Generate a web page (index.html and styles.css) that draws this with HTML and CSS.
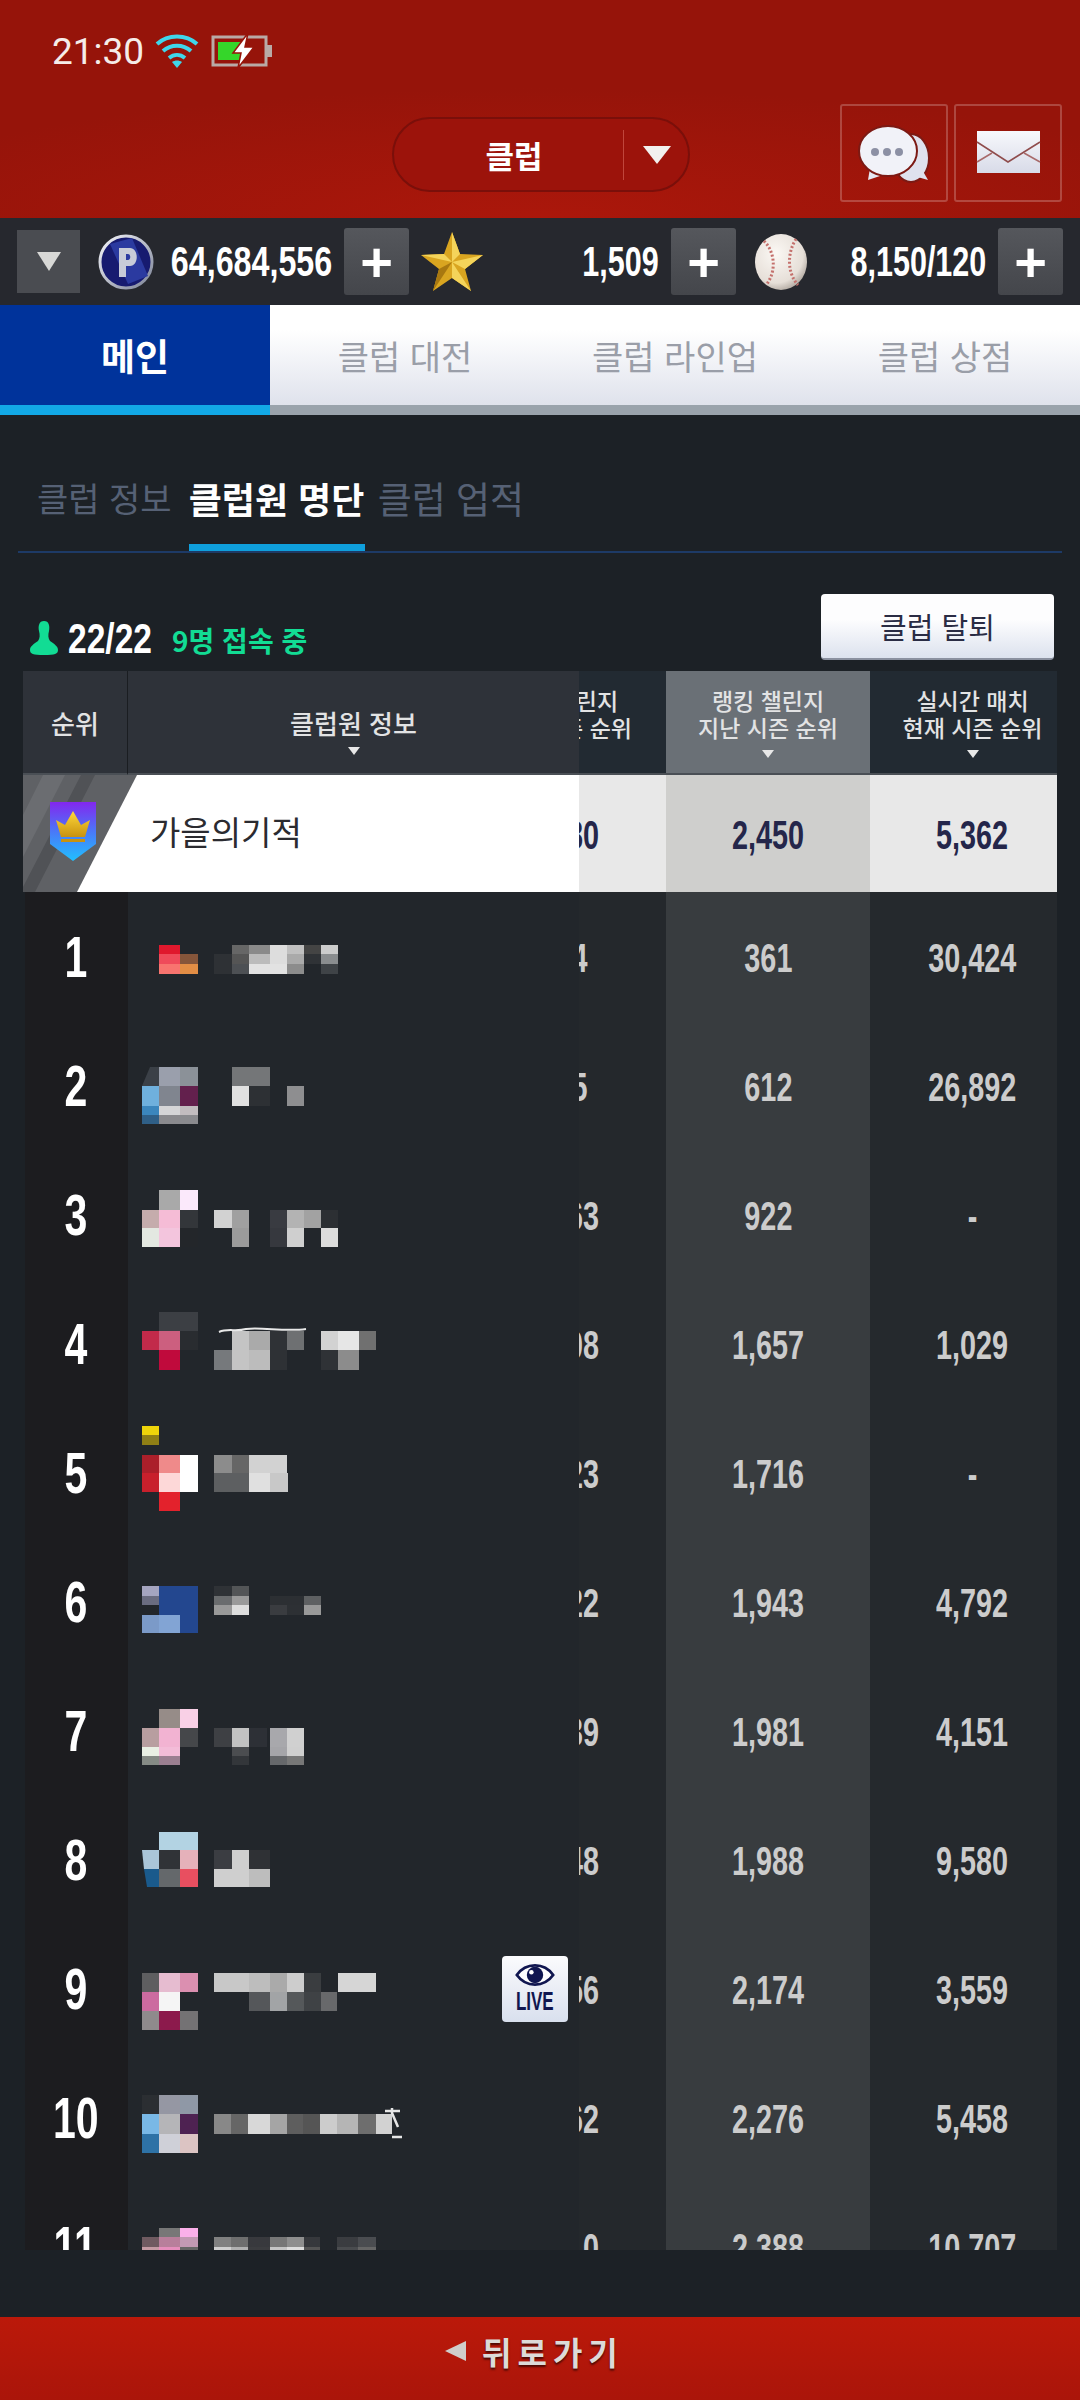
FILE: index.html
```html
<!DOCTYPE html>
<html lang="ko">
<head>
  <meta charset="UTF-8">
  <meta name="viewport" content="width=device-width, initial-scale=1.0">
  <title>클럽원 명단</title>
  <link rel="stylesheet" href="styles.css">
</head>
<body>
  <header class="top">
    <!-- status bar -->
    <div class="status">
      <span class="time">21:30</span>
      <svg class="wifi" viewBox="0 0 44 36" width="44" height="36">
        <g fill="none" stroke="#3fd6ea" stroke-width="4">
          <path d="M2 11 C13 1 31 1 42 11"/>
          <path d="M8 18 C16 11 28 11 36 18"/>
          <path d="M14 25 C19 21 25 21 30 25"/>
        </g>
        <path d="M17 29 C20 27 24 27 27 29 L22 35 Z" fill="#3fd6ea"/>
      </svg>
      <svg class="battery" viewBox="0 0 62 36" width="62" height="36">
        <rect x="2" y="4" width="53" height="28" fill="none" stroke="#b9aaa6" stroke-width="3"/>
        <rect x="56" y="12" width="5" height="12" fill="#b9aaa6"/>
        <rect x="7" y="9" width="24" height="18" fill="#35d62a"/>
        <path d="M37 0 L22 20 L30 20 L27 35 L43 14 L34 14 Z" fill="#fff" stroke="#961409" stroke-width="1.5"/>
      </svg>
    </div>
    <div class="nav">
      <div class="pill">
        <span class="pill-label">클럽</span>
        <i class="pill-sep"></i>
        <i class="pill-arrow"></i>
      </div>
      <div class="nav-icons">
        <div class="icon-box">
          <svg viewBox="0 0 108 98" width="108" height="98">
            <ellipse cx="71" cy="54" rx="18" ry="24" fill="#dfe2ee" stroke="#7c1a14" stroke-width="2"/>
            <path d="M74 72 L88 76 L80 62 Z" fill="#dfe2ee"/>
            <path d="M30 64 L28 76 L46 70 Z" fill="#e6e8f2"/>
            <ellipse cx="48" cy="47" rx="29" ry="25" fill="#f1f2f8" stroke="#7c1a14" stroke-width="2"/>
            <circle cx="35" cy="48" r="4" fill="#8c90a4"/>
            <circle cx="47" cy="48" r="4" fill="#8c90a4"/>
            <circle cx="59" cy="48" r="4" fill="#8c90a4"/>
          </svg>
        </div>
        <div class="icon-box">
          <svg viewBox="0 0 108 98" width="108" height="98">
            <defs>
              <linearGradient id="mailFill" x1="0" y1="0" x2="0" y2="1">
                <stop offset="0" stop-color="#f7f8fc"/>
                <stop offset="1" stop-color="#d8dbe8"/>
              </linearGradient>
            </defs>
            <rect x="23" y="27" width="63" height="42" fill="url(#mailFill)"/>
            <path d="M23 38 L54 58 L86 38" fill="none" stroke="#8f4c4c" stroke-width="1.5"/>
            <path d="M23 58 L38 49 M86 58 L70 49" fill="none" stroke="#a86a6a" stroke-width="1.5"/>
          </svg>
        </div>
      </div>
    </div>
  </header>

  <!-- currency bar -->
  <div class="resources">
    <div class="drop"><i></i></div>
    <div class="res res-points">
      <svg viewBox="0 0 56 56" width="56" height="56">
        <defs>
          <linearGradient id="coinRim" x1="0" y1="0" x2="1" y2="1">
            <stop offset="0" stop-color="#f4f5fa"/>
            <stop offset="1" stop-color="#7d8498"/>
          </linearGradient>
        </defs>
        <circle cx="28" cy="28" r="26" fill="#171b70" stroke="url(#coinRim)" stroke-width="3"/>
        <path d="M12 10 L34 4 L50 42 L30 50 Z" fill="#2b3aa0"/>
        <path d="M21 14 H32 C41 14 41 32 32 32 H28 V43 H21 Z M28 20 V26 H30 C33 26 33 20 30 20 Z" fill="#c8ccd8" fill-rule="evenodd"/>
      </svg>
      <span class="num"><b>64,684,556</b></span>
      <div class="plus">+</div>
    </div>
    <div class="res res-stars">
      <svg viewBox="0 0 64 60" width="64" height="60">
        <path d="M32 0 L40 22 L63 23 L45 37 L51 59 L32 46 L13 59 L19 37 L1 23 L24 22 Z" fill="#d9a520"/>
        <path d="M32 0 L40 22 L32 30 Z M63 23 L45 37 L32 30 Z M51 59 L32 46 L32 30 Z M1 23 L24 22 L32 30 Z" fill="#f4d45a"/>
        <path d="M13 59 L19 37 L32 30 Z" fill="#a87810"/>
      </svg>
      <span class="num"><b>1,509</b></span>
      <div class="plus">+</div>
    </div>
    <div class="res res-balls">
      <svg viewBox="0 0 54 58" width="54" height="58">
        <defs>
          <radialGradient id="ballFill" cx="0.4" cy="0.35" r="0.75">
            <stop offset="0" stop-color="#fbf8f4"/>
            <stop offset="0.7" stop-color="#e6dfd8"/>
            <stop offset="1" stop-color="#9d948c"/>
          </radialGradient>
        </defs>
        <ellipse cx="27" cy="29" rx="26" ry="28" fill="url(#ballFill)"/>
        <path d="M10 8 C22 20 22 40 12 52" fill="none" stroke="#c4706c" stroke-width="3" stroke-dasharray="2 2"/>
        <path d="M42 6 C33 20 33 40 44 52" fill="none" stroke="#c4706c" stroke-width="3" stroke-dasharray="2 2"/>
      </svg>
      <span class="num"><b>8,150/120</b></span>
      <div class="plus">+</div>
    </div>
  </div>

  <nav class="tabs">
    <div class="tab tab-on">메인</div>
    <div class="tab">클럽 대전</div>
    <div class="tab">클럽 라인업</div>
    <div class="tab">클럽 상점</div>
  </nav>

  <div class="subtabs">
    <span class="subtab subtab-a">클럽 정보</span>
    <span class="subtab subtab-on">클럽원 명단</span>
    <span class="subtab subtab-b">클럽 업적</span>
  </div>

  <div class="count-row">
    <svg class="person" viewBox="0 0 28 34" width="28" height="34">
      <path d="M14 0 C19 0 20 5 19 10 C18 14 18 17 20 20 C24 23 28 25 28 29 C28 33 25 34 14 34 C3 34 0 33 0 29 C0 25 4 23 8 20 C10 17 10 14 9 10 C8 5 9 0 14 0 Z" fill="#12dc94"/>
    </svg>
    <span class="count">22/22</span>
    <span class="online">9명 접속 중</span>
    <div class="leave">클럽 탈퇴</div>
  </div>

  <section class="table">
    <div class="row head">
      <div class="c-rank">순위</div>
      <div class="c-info">클럽원 정보<i class="sort"></i></div>
      <div class="c-scroll"><span class="clip-text">랭킹 챌린지<br>현재 시즌 순위</span></div>
      <div class="c-hi">랭킹 챌린지<br>지난 시즌 순위<i class="sort"></i></div>
      <div class="c-last">실시간 매치<br>현재 시즌 순위<i class="sort"></i></div>
    </div>

    <div class="row me">
      <div class="me-plate">
        <svg viewBox="0 0 114 117" width="114" height="117">
          <defs>
            <linearGradient id="shieldFill" x1="0" y1="0" x2="0" y2="1">
              <stop offset="0" stop-color="#8327ee"/>
              <stop offset="0.5" stop-color="#4a78f8"/>
              <stop offset="1" stop-color="#20c0ff"/>
            </linearGradient>
            <linearGradient id="crownFill" x1="0" y1="0" x2="0" y2="1">
              <stop offset="0" stop-color="#ffd83a"/>
              <stop offset="1" stop-color="#c8920f"/>
            </linearGradient>
          </defs>
          <path d="M0 0 H114 L54 117 H0 Z" fill="#5f6165"/>
          <path d="M20 0 H42 L0 82 V40 Z" fill="#6b6d71"/>
          <path d="M58 0 H72 L12 117 H0 V112 Z" fill="#505256"/>
          <path d="M27 27 H73 V69 L50 86 L27 69 Z" fill="url(#shieldFill)"/>
          <path d="M33 45 L42 50 L50 36 L58 50 L67 45 L62 62 H38 Z" fill="url(#crownFill)"/>
          <rect x="38" y="64" width="24" height="3" fill="#c8920f"/>
        </svg>
        <span class="me-name">가을의기적</span>
      </div>
      <div class="c-scroll"><span class="v">1,380</span></div>
      <div class="c-hi"><span class="v">2,450</span></div>
      <div class="c-last"><span class="v">5,362</span></div>
    </div>

    <div class="rows">
      <div class="row">
        <div class="c-rank"><span class="v">1</span></div>
        <div class="c-info">
          <svg class="mosaic" viewBox="142 0 260 129" width="260" height="129">
            <rect x="159" y="53" width="21" height="9" fill="#e0182d"/><rect x="159" y="62" width="21" height="10" fill="#ef4b5a"/><rect x="159" y="72" width="21" height="10" fill="#f8746f"/>
            <rect x="180" y="62" width="18" height="10" fill="#85553a"/><rect x="180" y="72" width="18" height="10" fill="#e28d45"/>
            <rect x="232" y="53" width="17" height="9" fill="#666"/><rect x="249" y="53" width="21" height="9" fill="#8a8a8a"/><rect x="270" y="53" width="17" height="9" fill="#ddd"/><rect x="287" y="53" width="17" height="9" fill="#c0c0c0"/><rect x="304" y="53" width="17" height="9" fill="#444"/><rect x="321" y="53" width="17" height="9" fill="#ccc"/>
            <rect x="214" y="62" width="18" height="10" fill="#2e3135"/><rect x="232" y="62" width="17" height="10" fill="#555"/><rect x="249" y="62" width="21" height="10" fill="#bbb"/><rect x="270" y="62" width="17" height="10" fill="#ddd"/><rect x="287" y="62" width="17" height="10" fill="#aaa"/><rect x="304" y="62" width="17" height="10" fill="#2f3236"/><rect x="321" y="62" width="17" height="10" fill="#8a8d8f"/>
            <rect x="214" y="72" width="18" height="10" fill="#2e3135"/><rect x="232" y="72" width="17" height="10" fill="#4d5054"/><rect x="249" y="72" width="38" height="10" fill="#e2e2e2"/><rect x="287" y="72" width="17" height="10" fill="#8c8c8c"/><rect x="321" y="72" width="17" height="10" fill="#3f4347"/>
          </svg>
        </div>
        <div class="c-scroll"><span class="v">814</span></div><div class="c-hi"><span class="v">361</span></div><div class="c-last"><span class="v">30,424</span></div>
      </div>

      <div class="row">
        <div class="c-rank"><span class="v">2</span></div>
        <div class="c-info">
          <svg class="mosaic" viewBox="142 0 260 129" width="260" height="129">
            <path d="M150 46 H159 V65 H142 Z" fill="#3b4047"/>
            <rect x="159" y="46" width="21" height="19" fill="#9a9fac"/><rect x="180" y="46" width="18" height="19" fill="#8b9198"/>
            <rect x="142" y="65" width="17" height="20" fill="#6fb0dd"/><rect x="142" y="85" width="17" height="9" fill="#3b86bd"/><rect x="142" y="94" width="17" height="9" fill="#2f5f87"/>
            <rect x="159" y="65" width="21" height="20" fill="#80858f"/><rect x="180" y="65" width="18" height="20" fill="#63204d"/>
            <rect x="159" y="85" width="21" height="9" fill="#d5d5d7"/><rect x="180" y="85" width="18" height="9" fill="#c2bcbf"/><rect x="159" y="94" width="39" height="9" fill="#8a8a8e"/>
            <rect x="232" y="46" width="38" height="19" fill="#747678"/><rect x="232" y="65" width="17" height="20" fill="#e0e0e0"/><rect x="249" y="65" width="21" height="20" fill="#2d3034"/><rect x="287" y="65" width="17" height="20" fill="#8e8e90"/>
          </svg>
        </div>
        <div class="c-scroll"><span class="v">895</span></div><div class="c-hi"><span class="v">612</span></div><div class="c-last"><span class="v">26,892</span></div>
      </div>

      <div class="row">
        <div class="c-rank"><span class="v">3</span></div>
        <div class="c-info">
          <svg class="mosaic" viewBox="142 0 260 129" width="260" height="129">
            <rect x="159" y="40" width="21" height="20" fill="#a9a9a9"/><rect x="180" y="40" width="18" height="20" fill="#fbe9fb"/>
            <rect x="142" y="60" width="17" height="18" fill="#c5acac"/><rect x="159" y="60" width="21" height="18" fill="#f5bcd6"/><rect x="180" y="60" width="18" height="18" fill="#33363a"/>
            <rect x="142" y="78" width="17" height="19" fill="#e3e8e1"/><rect x="159" y="78" width="21" height="19" fill="#f3c5dd"/><rect x="180" y="78" width="18" height="19" fill="#23262a"/>
            <rect x="214" y="60" width="18" height="18" fill="#d2d2d2"/><rect x="232" y="60" width="17" height="18" fill="#a0a0a0"/><rect x="270" y="60" width="17" height="18" fill="#393b41"/><rect x="287" y="60" width="17" height="18" fill="#b3b3b3"/><rect x="304" y="60" width="17" height="18" fill="#a2a2a2"/><rect x="321" y="60" width="17" height="18" fill="#2c2f33"/>
            <rect x="232" y="78" width="17" height="19" fill="#9b9b9b"/><rect x="270" y="78" width="17" height="19" fill="#36383e"/><rect x="287" y="78" width="17" height="19" fill="#cfcfcf"/><rect x="321" y="78" width="17" height="19" fill="#dcdcdc"/>
          </svg>
        </div>
        <div class="c-scroll"><span class="v">1,063</span></div><div class="c-hi"><span class="v">922</span></div><div class="c-last"><span class="v">-</span></div>
      </div>

      <div class="row">
        <div class="c-rank"><span class="v">4</span></div>
        <div class="c-info">
          <svg class="mosaic" viewBox="142 0 260 129" width="260" height="129">
            <rect x="159" y="33" width="39" height="19" fill="#3c3f44"/>
            <rect x="142" y="52" width="17" height="19" fill="#c22a4a"/><rect x="159" y="52" width="21" height="19" fill="#cc5f7f"/><rect x="180" y="52" width="18" height="19" fill="#292c30"/><rect x="159" y="71" width="21" height="20" fill="#c00a3c"/>
            <rect x="232" y="52" width="17" height="19" fill="#c4c4c4"/><rect x="249" y="52" width="21" height="19" fill="#aaa"/><rect x="270" y="52" width="17" height="19" fill="#2f3236"/><rect x="287" y="52" width="17" height="19" fill="#6e7072"/><rect x="321" y="52" width="17" height="19" fill="#d2d2d2"/><rect x="338" y="52" width="21" height="19" fill="#e6e6e6"/><rect x="359" y="52" width="17" height="19" fill="#707070"/>
            <rect x="214" y="71" width="18" height="20" fill="#76797c"/><rect x="232" y="71" width="17" height="20" fill="#c4c4c4"/><rect x="249" y="71" width="21" height="20" fill="#bcbcbc"/><rect x="270" y="71" width="17" height="20" fill="#2e3135"/><rect x="321" y="71" width="17" height="20" fill="#2f3236"/><rect x="338" y="71" width="21" height="20" fill="#8c8c8c"/>
            <path d="M219 53 C228 49 236 53 246 50 C262 48 286 53 306 50" fill="none" stroke="#e8e8e8" stroke-width="2"/>
          </svg>
        </div>
        <div class="c-scroll"><span class="v">1,108</span></div><div class="c-hi"><span class="v">1,657</span></div><div class="c-last"><span class="v">1,029</span></div>
      </div>

      <div class="row">
        <div class="c-rank"><span class="v">5</span></div>
        <div class="c-info">
          <svg class="mosaic" viewBox="142 0 260 129" width="260" height="129">
            <rect x="142" y="18" width="17" height="9" fill="#eed40a"/><rect x="142" y="27" width="17" height="10" fill="#8f7f15"/>
            <rect x="142" y="47" width="17" height="18" fill="#ab1f2a"/><rect x="159" y="47" width="21" height="18" fill="#ef8a8a"/><rect x="180" y="47" width="18" height="18" fill="#fff"/>
            <rect x="142" y="65" width="17" height="19" fill="#c8202c"/><rect x="159" y="65" width="21" height="19" fill="#fdd8d8"/><rect x="180" y="65" width="18" height="19" fill="#fff"/><rect x="159" y="84" width="21" height="19" fill="#e3222c"/>
            <rect x="214" y="47" width="18" height="18" fill="#8c8c8c"/><rect x="232" y="47" width="17" height="18" fill="#666"/><rect x="249" y="47" width="38" height="18" fill="#d2d2d2"/>
            <rect x="214" y="65" width="35" height="19" fill="#5d5f61"/><rect x="249" y="65" width="21" height="19" fill="#e0e0e0"/><rect x="270" y="65" width="18" height="19" fill="#c8c8c8"/>
          </svg>
        </div>
        <div class="c-scroll"><span class="v">1,123</span></div><div class="c-hi"><span class="v">1,716</span></div><div class="c-last"><span class="v">-</span></div>
      </div>

      <div class="row">
        <div class="c-rank"><span class="v">6</span></div>
        <div class="c-info">
          <svg class="mosaic" viewBox="142 0 260 129" width="260" height="129">
            <rect x="142" y="49" width="17" height="10" fill="#a5a5c0"/><rect x="142" y="59" width="17" height="9" fill="#6a6c80"/><rect x="159" y="49" width="39" height="29" fill="#23478f"/>
            <rect x="142" y="78" width="17" height="18" fill="#7b9ac8"/><rect x="159" y="78" width="21" height="18" fill="#82a4d4"/><rect x="180" y="78" width="18" height="18" fill="#23478f"/>
            <rect x="214" y="49" width="18" height="10" fill="#2f3236"/><rect x="232" y="49" width="17" height="10" fill="#535557"/>
            <rect x="214" y="59" width="18" height="9" fill="#6a6c6e"/><rect x="232" y="59" width="17" height="9" fill="#9a9a9a"/><rect x="270" y="59" width="34" height="9" fill="#2c2f33"/><rect x="304" y="59" width="17" height="9" fill="#5e6062"/>
            <rect x="214" y="68" width="18" height="10" fill="#999"/><rect x="232" y="68" width="17" height="10" fill="#ddd"/><rect x="270" y="68" width="17" height="10" fill="#3a3c40"/><rect x="287" y="68" width="17" height="10" fill="#2d3034"/><rect x="304" y="68" width="17" height="10" fill="#999"/>
          </svg>
        </div>
        <div class="c-scroll"><span class="v">1,322</span></div><div class="c-hi"><span class="v">1,943</span></div><div class="c-last"><span class="v">4,792</span></div>
      </div>

      <div class="row">
        <div class="c-rank"><span class="v">7</span></div>
        <div class="c-info">
          <svg class="mosaic" viewBox="142 0 260 129" width="260" height="129">
            <rect x="159" y="43" width="21" height="19" fill="#968c88"/><rect x="180" y="43" width="18" height="19" fill="#f9d0e6"/>
            <rect x="142" y="62" width="17" height="19" fill="#b89ea0"/><rect x="159" y="62" width="21" height="19" fill="#f2b3d2"/><rect x="180" y="62" width="18" height="19" fill="#45474a"/>
            <rect x="142" y="81" width="17" height="9" fill="#e9efe4"/><rect x="159" y="81" width="21" height="9" fill="#f3bcd8"/><rect x="142" y="90" width="17" height="9" fill="#858a85"/><rect x="159" y="90" width="21" height="9" fill="#9b7f91"/>
            <rect x="214" y="62" width="18" height="19" fill="#3e4044"/><rect x="232" y="62" width="17" height="19" fill="#c2c2c2"/><rect x="249" y="62" width="18" height="19" fill="#2d3036"/><rect x="270" y="62" width="17" height="19" fill="#a8a8ac"/><rect x="287" y="62" width="17" height="19" fill="#d0d0d0"/>
            <rect x="232" y="81" width="17" height="9" fill="#4b4d50"/><rect x="270" y="81" width="17" height="9" fill="#a5a5a9"/><rect x="287" y="81" width="17" height="9" fill="#cfcfcf"/>
            <rect x="232" y="90" width="17" height="9" fill="#33363a"/><rect x="270" y="90" width="17" height="9" fill="#66686b"/><rect x="287" y="90" width="17" height="9" fill="#777"/>
          </svg>
        </div>
        <div class="c-scroll"><span class="v">1,439</span></div><div class="c-hi"><span class="v">1,981</span></div><div class="c-last"><span class="v">4,151</span></div>
      </div>

      <div class="row">
        <div class="c-rank"><span class="v">8</span></div>
        <div class="c-info">
          <svg class="mosaic" viewBox="142 0 260 129" width="260" height="129">
            <rect x="159" y="37" width="39" height="18" fill="#b3d3e3"/>
            <path d="M142 55 H159 V74 H144 Z" fill="#aac5d8"/><rect x="159" y="55" width="21" height="19" fill="#303337"/><rect x="180" y="55" width="18" height="19" fill="#e5b1ba"/>
            <path d="M144 74 H159 V92 H147 Z" fill="#1a5a8c"/><rect x="159" y="74" width="21" height="18" fill="#64686b"/><rect x="180" y="74" width="18" height="18" fill="#e84f60"/>
            <rect x="214" y="55" width="18" height="19" fill="#3b3d42"/><rect x="232" y="55" width="17" height="19" fill="#cfcfcf"/><rect x="249" y="55" width="21" height="19" fill="#2f3135"/>
            <rect x="214" y="74" width="35" height="18" fill="#cfcfcf"/><rect x="249" y="74" width="21" height="18" fill="#bdbdbd"/>
          </svg>
        </div>
        <div class="c-scroll"><span class="v">1,548</span></div><div class="c-hi"><span class="v">1,988</span></div><div class="c-last"><span class="v">9,580</span></div>
      </div>

      <div class="row">
        <div class="c-rank"><span class="v">9</span></div>
        <div class="c-info">
          <svg class="mosaic" viewBox="142 0 260 129" width="260" height="129">
            <rect x="142" y="49" width="17" height="19" fill="#5e5e60"/><rect x="159" y="49" width="21" height="19" fill="#e6bcd0"/><rect x="180" y="49" width="18" height="19" fill="#db8fb0"/>
            <rect x="142" y="68" width="17" height="19" fill="#cc6ba0"/><rect x="159" y="68" width="21" height="19" fill="#f5f5f5"/>
            <rect x="142" y="87" width="17" height="19" fill="#8f8a8c"/><rect x="159" y="87" width="21" height="19" fill="#8c1a4c"/><rect x="180" y="87" width="18" height="19" fill="#747274"/>
            <rect x="214" y="49" width="35" height="19" fill="#c8c8c8"/><rect x="249" y="49" width="21" height="19" fill="#bdbdbd"/><rect x="270" y="49" width="17" height="19" fill="#aaa"/><rect x="287" y="49" width="17" height="19" fill="#cdcdcd"/><rect x="304" y="49" width="17" height="19" fill="#3a3d40"/><rect x="338" y="49" width="38" height="19" fill="#d6d6d6"/>
            <rect x="249" y="68" width="21" height="19" fill="#55575a"/><rect x="270" y="68" width="17" height="19" fill="#a2a4a6"/><rect x="287" y="68" width="17" height="19" fill="#55585a"/><rect x="304" y="68" width="17" height="19" fill="#3f4245"/><rect x="321" y="68" width="16" height="19" fill="#68696b"/>
          </svg>
          <div class="live">
            <svg viewBox="0 0 44 26" width="40" height="24">
              <path d="M2 13 C12 -1 32 -1 42 13 C32 27 12 27 2 13 Z" fill="#fff" stroke="#101650" stroke-width="3"/>
              <circle cx="22" cy="13" r="9" fill="#101650"/>
              <circle cx="18" cy="10" r="2.5" fill="#fff"/>
            </svg>
            <span>LIVE</span>
          </div>
        </div>
        <div class="c-scroll"><span class="v">1,656</span></div><div class="c-hi"><span class="v">2,174</span></div><div class="c-last"><span class="v">3,559</span></div>
      </div>

      <div class="row">
        <div class="c-rank"><span class="v">10</span></div>
        <div class="c-info">
          <svg class="mosaic" viewBox="142 0 260 129" width="260" height="129">
            <rect x="142" y="42" width="17" height="19" fill="#2b2e32"/><rect x="159" y="42" width="21" height="19" fill="#9597a3"/><rect x="180" y="42" width="18" height="19" fill="#8f98a6"/>
            <rect x="142" y="61" width="17" height="20" fill="#79b8e6"/><rect x="159" y="61" width="21" height="20" fill="#b5b5b8"/><rect x="180" y="61" width="18" height="20" fill="#4e2252"/>
            <rect x="142" y="81" width="17" height="19" fill="#2e72a6"/><rect x="159" y="81" width="21" height="19" fill="#cfd0d8"/><rect x="180" y="81" width="18" height="19" fill="#dcc4c3"/>
            <rect x="214" y="61" width="17" height="20" fill="#888"/><rect x="231" y="61" width="17" height="20" fill="#666"/><rect x="248" y="61" width="22" height="20" fill="#d8d8d8"/><rect x="270" y="61" width="17" height="20" fill="#a5a5a5"/><rect x="287" y="61" width="16" height="20" fill="#5e5e5e"/><rect x="303" y="61" width="17" height="20" fill="#555"/><rect x="320" y="61" width="17" height="20" fill="#ccc"/><rect x="337" y="61" width="21" height="20" fill="#b5b5b5"/><rect x="358" y="61" width="18" height="20" fill="#6e6e6e"/><rect x="376" y="61" width="16" height="20" fill="#d2d2d2"/>
            <path d="M385 58 H400 M392 55 V60 L398 74 M392 84 H402" fill="none" stroke="#e6e6e6" stroke-width="2.5"/>
          </svg>
        </div>
        <div class="c-scroll"><span class="v">1,762</span></div><div class="c-hi"><span class="v">2,276</span></div><div class="c-last"><span class="v">5,458</span></div>
      </div>

      <div class="row">
        <div class="c-rank"><span class="v">11</span></div>
        <div class="c-info">
          <svg class="mosaic" viewBox="142 0 260 129" width="260" height="129">
            <rect x="159" y="46" width="21" height="9" fill="#777"/><rect x="180" y="46" width="18" height="9" fill="#fbb0ea"/>
            <rect x="142" y="55" width="17" height="10" fill="#6f5a60"/><rect x="159" y="55" width="21" height="10" fill="#b87f9b"/><rect x="180" y="55" width="18" height="10" fill="#c299b3"/>
            <rect x="142" y="65" width="17" height="10" fill="#c49ba3"/><rect x="159" y="65" width="21" height="10" fill="#e68ebc"/><rect x="180" y="65" width="18" height="10" fill="#666"/>
            <rect x="214" y="55" width="17" height="10" fill="#808080"/><rect x="231" y="55" width="17" height="10" fill="#6e6e6e"/><rect x="248" y="55" width="22" height="10" fill="#38393d"/><rect x="270" y="55" width="17" height="10" fill="#777"/><rect x="287" y="55" width="17" height="10" fill="#8e8e8e"/><rect x="304" y="55" width="16" height="10" fill="#36383c"/><rect x="337" y="55" width="21" height="10" fill="#3a3c40"/><rect x="358" y="55" width="18" height="10" fill="#4a4c50"/>
            <rect x="214" y="65" width="17" height="10" fill="#cfcfcf"/><rect x="231" y="65" width="17" height="10" fill="#b0b0b0"/><rect x="248" y="65" width="22" height="10" fill="#3c3d40"/><rect x="270" y="65" width="17" height="10" fill="#c5c5c5"/><rect x="287" y="65" width="17" height="10" fill="#ddd"/><rect x="304" y="65" width="16" height="10" fill="#555"/><rect x="337" y="65" width="21" height="10" fill="#4a4c4f"/><rect x="358" y="65" width="18" height="10" fill="#666"/>
          </svg>
        </div>
        <div class="c-scroll"><span class="v">1,810</span></div><div class="c-hi"><span class="v">2,388</span></div><div class="c-last"><span class="v">10,707</span></div>
      </div>
    </div>
  </section>

  <footer class="back">
    <i class="back-arrow"></i>
    <span>뒤로가기</span>
  </footer>
</body>
</html>
```

FILE: styles.css
```css
/* base */
html, body {
  margin: 0;
  padding: 0;
}
body {
  width: 1080px;
  height: 2400px;
  overflow: hidden;
  display: flex;
  flex-direction: column;
  background-color: #1c2126;
  font-family: "Noto Sans CJK KR", "Noto Sans", sans-serif;
  color: #fff;
}
i {
  display: block;
}
svg {
  display: block;
  flex: none;
}

/* red header */
.top {
  height: 218px;
  flex: none;
  background: radial-gradient(ellipse 700px 130px at 50% 100%, #ab170b, #96140a);
}
.status {
  height: 102px;
  padding-left: 52px;
  display: flex;
  align-items: center;
}
.time {
  font-family: Roboto, sans-serif;
  font-size: 37px;
  color: #f5ece9;
  width: 103px;
}
.battery {
  margin-left: 12px;
}
.nav {
  height: 116px;
  display: flex;
  align-items: flex-start;
  padding: 2px 18px 0 392px;
}
.pill {
  width: 298px;
  height: 75px;
  margin-top: 13px;
  box-sizing: border-box;
  border: 2px solid #7a0f0a;
  border-radius: 38px;
  background-color: #9c130b;
  display: flex;
  align-items: center;
}
.pill-label {
  width: 229px;
  padding-left: 11px;
  box-sizing: border-box;
  text-align: center;
  font-size: 31px;
  font-weight: 700;
  line-height: 1;
}
.pill-sep {
  width: 1px;
  height: 50px;
  background-color: #c0463c;
}
.pill-arrow {
  margin-left: 19px;
  width: 0;
  height: 0;
  border-left: 14px solid transparent;
  border-right: 14px solid transparent;
  border-top: 18px solid #f2f0ee;
}
.nav-icons {
  margin-left: auto;
  display: flex;
  gap: 6px;
}
.icon-box {
  width: 108px;
  height: 98px;
  box-sizing: border-box;
  border: 2px solid rgba(255, 255, 255, 0.22);
  border-radius: 3px;
  display: flex;
  align-items: center;
  justify-content: center;
}

/* currency bar */
.resources {
  height: 87px;
  flex: none;
  box-sizing: border-box;
  padding-left: 17px;
  background-color: #26282e;
  display: flex;
  align-items: center;
}
.drop {
  width: 63px;
  height: 63px;
  margin-right: 18px;
  background-color: #4a4c51;
  display: flex;
  align-items: center;
  justify-content: center;
}
.drop i {
  width: 0;
  height: 0;
  border-left: 12px solid transparent;
  border-right: 12px solid transparent;
  border-top: 19px solid #d8d8d6;
}
.res {
  display: flex;
  align-items: center;
}
.res-points {
  width: 311px;
}
.res-stars {
  width: 316px;
  margin-left: 11px;
}
.res-balls {
  width: 309px;
  margin-left: 18px;
}
.num {
  flex: 1;
  min-width: 0;
  display: flex;
  justify-content: flex-end;
  margin-right: 12px;
  font-family: "Liberation Sans", sans-serif;
  font-size: 43px;
  line-height: 1;
  color: #fff;
  white-space: nowrap;
}
/* the game font is condensed, none is installed so squeeze the glyphs */
.num b {
  flex: none;
  transform: scaleX(0.71);
  transform-origin: right center;
}
.res-points .num b {
  transform: scaleX(0.75);
}
.plus {
  width: 65px;
  height: 67px;
  flex: none;
  border-radius: 3px;
  background: linear-gradient(#55575c, #44464b);
  display: flex;
  align-items: center;
  justify-content: center;
  font-family: "Liberation Sans", sans-serif;
  font-weight: 700;
  font-size: 56px;
  line-height: 1;
}

/* main tabs */
.tabs {
  height: 110px;
  flex: none;
  display: flex;
}
.tab {
  flex: 1;
  height: 100px;
  border-bottom: 10px solid #9aa3ac;
  background: linear-gradient(#fff 25%, #dfe2ec);
  color: #9a9ea8;
  font-size: 34px;
  display: flex;
  align-items: center;
  justify-content: center;
}
.tab-on {
  flex: none;
  width: 270px;
  background: #00339b;
  border-bottom-color: #12a9e6;
  color: #fff;
  font-size: 37px;
  font-weight: 700;
}

/* sub tabs */
.subtabs {
  margin: 56px 18px 0;
  height: 80px;
  flex: none;
  padding-left: 19px;
  border-bottom: 2px solid #1d3a66;
  display: flex;
  align-items: flex-start;
  font-size: 37px;
  line-height: 54px;
}
.subtab {
  color: #566175;
  height: 80px;
  box-sizing: border-box;
  white-space: nowrap;
}
.subtab-a {
  font-size: 34px;
}
.subtab-on {
  width: 176px;
  margin: 0 13px 0 17px;
  color: #fff;
  font-weight: 700;
  font-size: 36px;
  border-bottom: 7px solid #0f9fdc;
}

/* member count */
.count-row {
  height: 118px;
  flex: none;
  padding: 0 26px 0 30px;
  box-sizing: border-box;
  display: flex;
  align-items: flex-end;
}
.person {
  margin-bottom: 16px;
}
.count {
  width: 85px;
  margin: 0 0 14px 10px;
  font-family: "Liberation Sans", sans-serif;
  font-weight: 700;
  font-size: 43px;
  line-height: 38px;
  white-space: nowrap;
  transform: scaleX(0.78);
  transform-origin: left center;
}
.online {
  margin: 0 0 13px 19px;
  font-size: 28px;
  font-weight: 700;
  line-height: 36px;
  color: #12dc94;
}
.leave {
  margin: 0 0 11px auto;
  width: 233px;
  height: 66px;
  border-radius: 4px;
  background: linear-gradient(#fdfdfe 40%, #dce2ee);
  border-bottom: 2px solid #8b91a0;
  box-sizing: border-box;
  color: #2a2c44;
  font-size: 29px;
  display: flex;
  align-items: center;
  justify-content: center;
}

/* table */
.table {
  margin-left: 23px;
  width: 1034px;
  height: 1579px;
  flex: none;
  overflow: hidden;
}
.row {
  height: 129px;
  display: flex;
  font-family: "Liberation Sans", sans-serif;
  font-weight: 700;
  font-size: 40px;
  color: #ccc;
}
.row > div {
  flex: none;
  display: flex;
  align-items: center;
  justify-content: center;
  box-sizing: border-box;
}
.v {
  flex: none;
  transform: scaleX(0.72);
}
.row > .c-rank {
  width: 105px;
  background-color: #1c1c1f;
  border-left: 2px solid #1c2126;
  font-size: 57px;
  color: #fff;
  padding-right: 2px;
}
.row > .c-info {
  width: 451px;
  padding-left: 14px;
  background-color: #22262b;
  justify-content: flex-start;
}
.row > .c-scroll {
  width: 87px;
  padding-top: 4px;
  background-color: #24282c;
  overflow: hidden;
  white-space: nowrap;
}
/* number is centred on the part of the column hidden under the frozen cells */
.c-scroll .v {
  margin-right: 118px;
}
.row > .c-hi {
  width: 204px;
  padding-top: 4px;
  background-color: #383c3f;
}
.row > .c-last {
  width: 187px;
  padding: 4px 0 0 18px;
  background-color: #25292d;
}

/* table head */
.row.head {
  height: 104px;
  font-family: "Noto Sans CJK KR", sans-serif;
  font-weight: 500;
  font-size: 23px;
  line-height: 27px;
  color: #e2e3e4;
  text-align: center;
}
.head > div {
  flex-direction: column;
  border-bottom: 2px solid #4a4f55;
  white-space: nowrap;
  position: relative;
}
.row.head > .c-rank {
  padding: 0;
  font-size: 26px;
  color: #e2e3e4;
  background-color: #2e3239;
  border-left: 0;
  border-right: 1px solid #1a1d21;
}
.row.head > .c-info {
  padding: 0;
  font-size: 26px;
  background-color: #2e3239;
  justify-content: center;
}
.row.head > .c-scroll {
  padding: 0 0 8px;
  background-color: #222a32;
  align-items: flex-end;
}
.clip-text {
  flex: none;
  display: block;
  margin: 0 34px 8px 0;
  text-align: center;
}
.row.head > .c-hi {
  padding: 0 0 8px;
  background-color: #6a7076;
}
.row.head > .c-last {
  padding: 0 0 8px 18px;
  background-color: #222a32;
}
.sort {
  margin-top: 9px;
  margin-bottom: -9px;
  width: 0;
  height: 0;
  border-left: 6px solid transparent;
  border-right: 6px solid transparent;
  border-top: 8px solid #e8e8e8;
}
.c-info .sort {
  margin: 0;
  position: absolute;
  top: 76px;
}

/* my row */
.row.me {
  height: 117px;
  color: #24264a;
}
.me > .me-plate {
  width: 556px;
  background-color: #fff;
  justify-content: flex-start;
  box-shadow: 0 3px 3px rgba(0, 0, 0, 0.3);
}
.row.me > .c-scroll {
  background-color: #e8e8e8;
}
.row.me > .c-hi {
  background-color: #cfcfcd;
}
.row.me > .c-last {
  background-color: #e8e8e8;
}
.me-name {
  margin-left: 13px;
  margin-bottom: 6px;
  font-family: "Noto Sans CJK KR", sans-serif;
  font-weight: 400;
  font-size: 33px;
  color: #2b2b30;
}
.rows {
  height: 1358px;
}

/* live badge */
.live {
  margin-left: auto;
  margin-right: 11px;
  width: 66px;
  height: 66px;
  flex: none;
  padding-top: 7px;
  box-sizing: border-box;
  border-radius: 4px;
  background: linear-gradient(#fbfbfd, #d9e0ee);
  color: #101650;
  display: flex;
  flex-direction: column;
  align-items: center;
  font-size: 25px;
  font-weight: 700;
  line-height: 28px;
}
.live span {
  transform: scaleX(0.68);
}

/* back bar */
.back {
  margin-top: auto;
  height: 83px;
  flex: none;
  box-sizing: border-box;
  padding: 0 0 15px 445px;
  background: linear-gradient(#bb190a, #aa150a);
  display: flex;
  align-items: center;
  font-size: 32px;
  font-weight: 700;
  letter-spacing: 6px;
  color: #dcdad8;
  text-shadow: 0 2px 2px #4a0a05;
}
.back-arrow {
  width: 0;
  height: 0;
  margin-right: 16px;
  border-top: 10px solid transparent;
  border-bottom: 10px solid transparent;
  border-right: 21px solid #d0cdca;
}
```
